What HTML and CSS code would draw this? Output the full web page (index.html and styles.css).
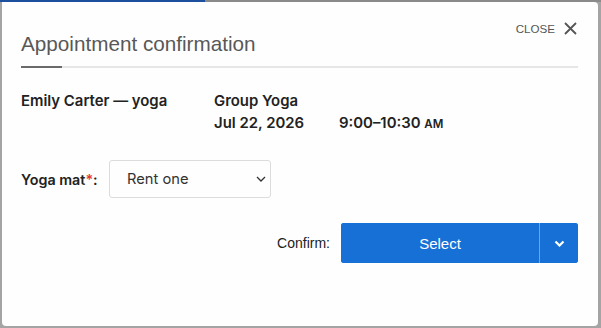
FILE: index.html
```html
<!DOCTYPE html>
<html lang="en">
<head>
  <meta charset="UTF-8" />
  <meta name="viewport" content="width=device-width, initial-scale=1.0"/>
  <title>Appointment confirmation</title>
  <link rel="stylesheet" href="styles.css">
</head>
<body>

  <div class="backdrop-strip"></div>

  <div class="modal">
    <button class="close-btn">CLOSE
      <svg width="13" height="13" viewBox="0 0 13 13"><path d="M1 1 L12 12 M12 1 L1 12" stroke="#555" stroke-width="1.8" fill="none"/></svg>
    </button>

    <h2 class="modal-title">Appointment confirmation</h2>
    <div class="title-rule"><span></span></div>

    <!-- Booking details -->
    <div class="details">
      <div class="who">Emily Carter — yoga</div>
      <div class="what">
        <div>Group Yoga</div>
        <div class="when">
          <span class="date">Jul 22, 2026</span>
          <span>9:00–10:30 <span class="ampm">AM</span></span>
        </div>
      </div>
    </div>

    <div class="field">
      <label class="field-label">Yoga mat<span class="req">*</span>:</label>
      <div class="select">
        <span>Rent one</span>
        <svg width="10" height="6" viewBox="0 0 10 6"><path d="M1 1 L5 5 L9 1" stroke="#333" stroke-width="1.3" fill="none"/></svg>
      </div>
    </div>

    <div class="confirm-row">
      <span class="confirm-label">Confirm:</span>
      <div class="split-btn">
        <button class="main">Select</button>
        <button class="more">
          <svg width="11" height="7" viewBox="0 0 11 7"><path d="M1.5 1.5 L5.5 5.5 L9.5 1.5" stroke="#fff" stroke-width="2.2" fill="none"/></svg>
        </button>
      </div>
    </div>
  </div>

</body>
</html>
```

FILE: styles.css
```css
body {
  margin: 0;
  background: #a4a4a4;
  font-family: Inter, "Liberation Sans", sans-serif;
  color: #222;
  height: 328px;
  overflow: hidden;
}

.backdrop-strip {
  height: 2px;
  background: linear-gradient(to right, #1c4f9e 0, #1c4f9e 205px, #8a8a8a 205px);
}

.modal {
  position: relative;
  margin: 0 3px 0 2px;
  height: 324px;
  background: #fefefe;
  border-radius: 0 4px 4px 4px;
  box-sizing: border-box;
  padding: 28px 20px 0 19px;
}

.close-btn {
  position: absolute;
  top: 20px;
  right: 21px;
  display: flex;
  align-items: center;
  gap: 9px;
  background: none;
  border: none;
  padding: 0;
  font-family: "Liberation Sans", Arial, sans-serif;
  font-size: 11.6px;
  color: #555;
  cursor: pointer;
}

.modal-title {
  margin: 0;
  font-family: "Liberation Sans", Arial, sans-serif;
  font-weight: normal;
  font-size: 20.7px;
  color: #585858;
  line-height: 28px;
}

.title-rule {
  margin-top: 8px;
  height: 2px;
  background: #e6e6e6;
}

.title-rule span {
  display: block;
  width: 41px;
  height: 2px;
  background: #6a6a6a;
}

.details {
  display: flex;
  margin-top: 22px;
  font-weight: 600;
  font-size: 14.9px;
  line-height: 22px;
}

.who {
  width: 193px;
}

.when {
  display: flex;
}

.date {
  width: 125px;
}

.ampm {
  font-size: 11.5px;
}

.field {
  display: flex;
  align-items: center;
  margin-top: 25px;
}

.field-label {
  font-weight: 600;
  font-size: 14.3px;
  width: 88px;
}

.req {
  color: #e53935;
}

.select {
  box-sizing: border-box;
  width: 162px;
  height: 38px;
  border: 1px solid #dcdcdc;
  border-radius: 3px;
  display: flex;
  align-items: center;
  justify-content: space-between;
  padding: 0 4px 0 17px;
  font-size: 14.7px;
  color: #333;
}

.confirm-row {
  display: flex;
  justify-content: flex-end;
  align-items: center;
  gap: 11px;
  margin-top: 25px;
}

.confirm-label {
  font-family: "Liberation Sans", Arial, sans-serif;
  font-size: 14px;
  color: #222;
}

.split-btn {
  display: flex;
  height: 40px;
  width: 237px;
  border-radius: 3px;
  overflow: hidden;
  background: #1770d6;
}

.split-btn button {
  border: none;
  background: #1770d6;
  color: #fff;
  cursor: pointer;
  font-family: "Liberation Sans", Arial, sans-serif;
  font-size: 15px;
}

.split-btn .main {
  flex: 1;
  border-right: 1px solid #6fa4e6;
}

.split-btn .more {
  width: 38px;
  display: flex;
  align-items: center;
  justify-content: center;
}
```
